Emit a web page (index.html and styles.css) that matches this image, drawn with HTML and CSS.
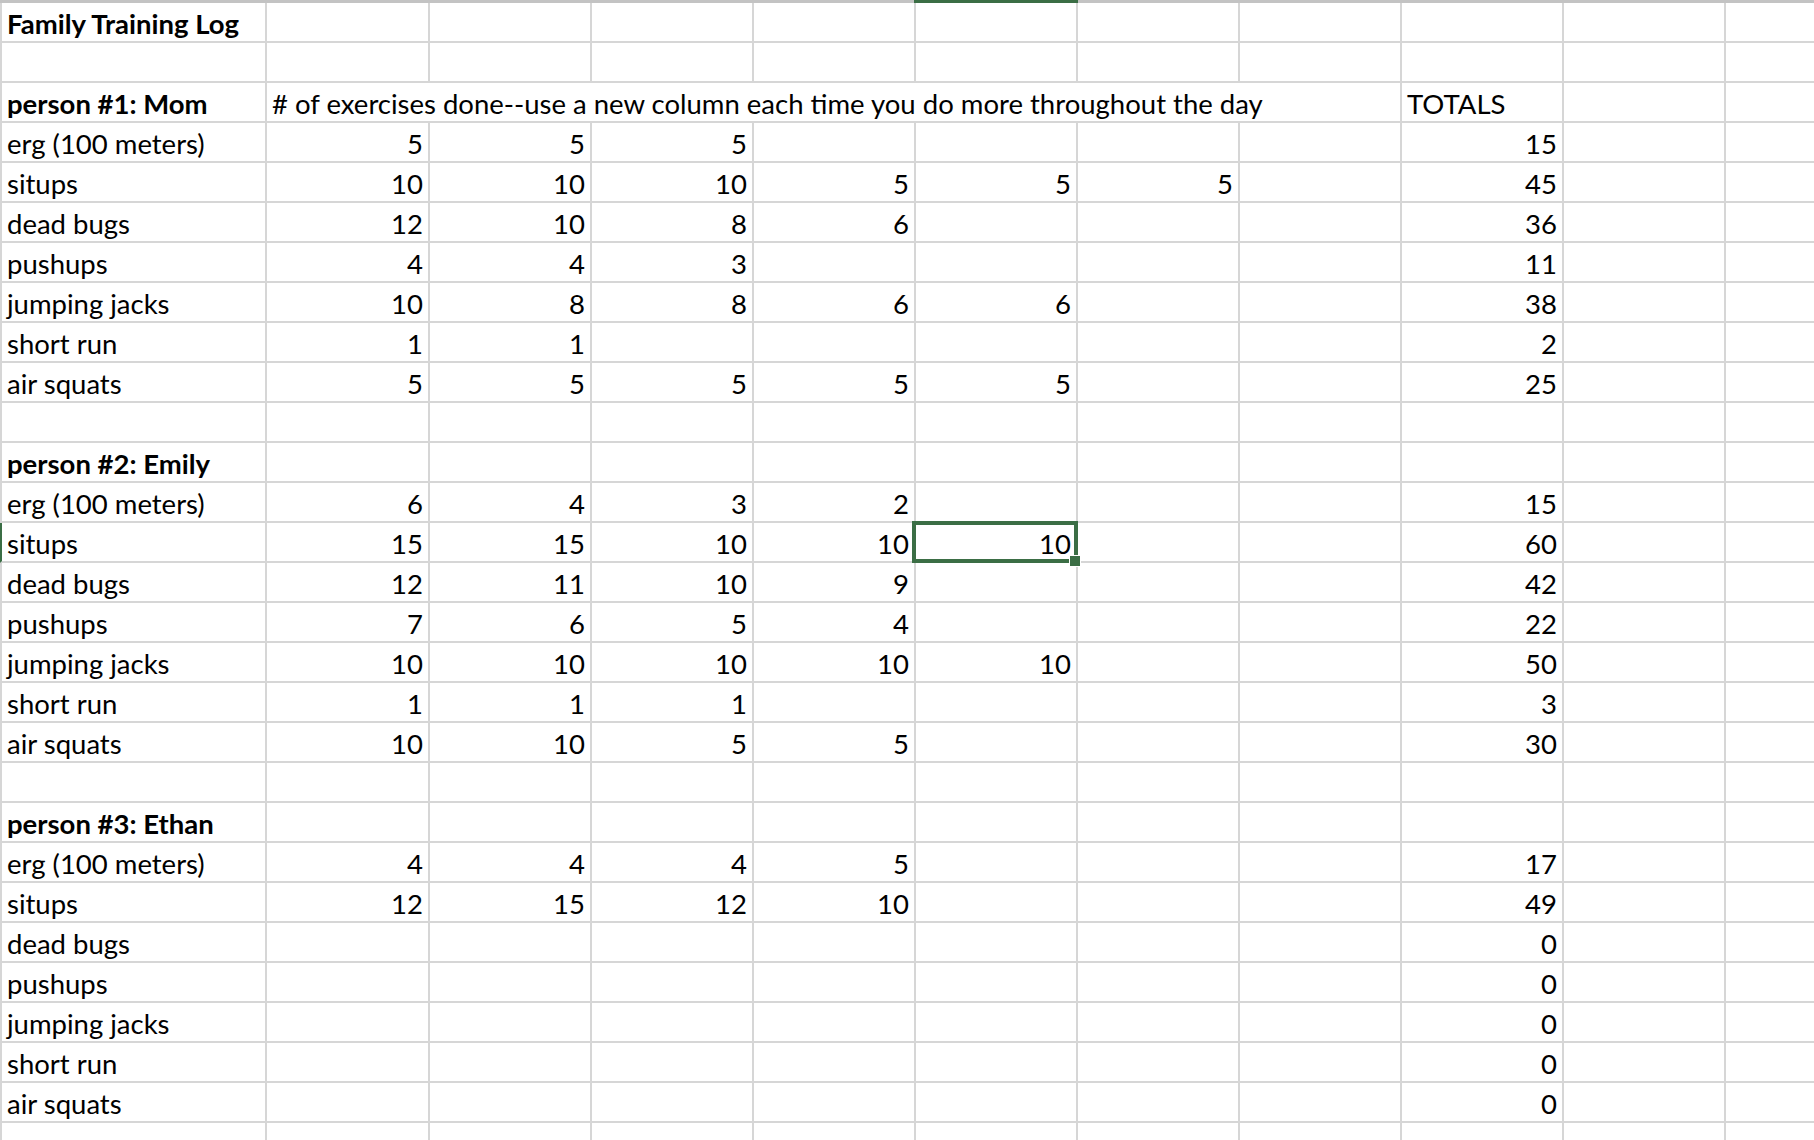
FILE: index.html
```html
<!DOCTYPE html>
<html lang="en">
<head>
<meta charset="utf-8">
<title>Family Training Log</title>
<link rel="stylesheet" href="styles.css">
</head>
<body>
<div class="sheet">
  <div class="colbar"><div class="colbar-sel"></div></div>

  <div class="row"><div class="c a b">Family Training Log</div><div class="c"></div><div class="c"></div><div class="c"></div><div class="c"></div><div class="c"></div><div class="c"></div><div class="c"></div><div class="c"></div><div class="c"></div><div class="c"></div></div>
  <div class="row"><div class="c a"></div><div class="c"></div><div class="c"></div><div class="c"></div><div class="c"></div><div class="c"></div><div class="c"></div><div class="c"></div><div class="c"></div><div class="c"></div><div class="c"></div></div>
  <div class="row"><div class="c a b">person #1: Mom</div><div class="c span"># of exercises done--use a new column each time you do more throughout the day</div><div class="c">TOTALS</div><div class="c"></div><div class="c"></div></div>
  <div class="row"><div class="c a">erg (100 meters)</div><div class="c n">5</div><div class="c n">5</div><div class="c n">5</div><div class="c n"></div><div class="c n"></div><div class="c n"></div><div class="c n"></div><div class="c n">15</div><div class="c"></div><div class="c"></div></div>
  <div class="row"><div class="c a">situps</div><div class="c n">10</div><div class="c n">10</div><div class="c n">10</div><div class="c n">5</div><div class="c n">5</div><div class="c n">5</div><div class="c n"></div><div class="c n">45</div><div class="c"></div><div class="c"></div></div>
  <div class="row"><div class="c a">dead bugs</div><div class="c n">12</div><div class="c n">10</div><div class="c n">8</div><div class="c n">6</div><div class="c n"></div><div class="c n"></div><div class="c n"></div><div class="c n">36</div><div class="c"></div><div class="c"></div></div>
  <div class="row"><div class="c a">pushups</div><div class="c n">4</div><div class="c n">4</div><div class="c n">3</div><div class="c n"></div><div class="c n"></div><div class="c n"></div><div class="c n"></div><div class="c n">11</div><div class="c"></div><div class="c"></div></div>
  <div class="row"><div class="c a">jumping jacks</div><div class="c n">10</div><div class="c n">8</div><div class="c n">8</div><div class="c n">6</div><div class="c n">6</div><div class="c n"></div><div class="c n"></div><div class="c n">38</div><div class="c"></div><div class="c"></div></div>
  <div class="row"><div class="c a">short run</div><div class="c n">1</div><div class="c n">1</div><div class="c n"></div><div class="c n"></div><div class="c n"></div><div class="c n"></div><div class="c n"></div><div class="c n">2</div><div class="c"></div><div class="c"></div></div>
  <div class="row"><div class="c a">air squats</div><div class="c n">5</div><div class="c n">5</div><div class="c n">5</div><div class="c n">5</div><div class="c n">5</div><div class="c n"></div><div class="c n"></div><div class="c n">25</div><div class="c"></div><div class="c"></div></div>
  <div class="row"><div class="c a"></div><div class="c"></div><div class="c"></div><div class="c"></div><div class="c"></div><div class="c"></div><div class="c"></div><div class="c"></div><div class="c"></div><div class="c"></div><div class="c"></div></div>

  <div class="row"><div class="c a b">person #2: Emily</div><div class="c"></div><div class="c"></div><div class="c"></div><div class="c"></div><div class="c"></div><div class="c"></div><div class="c"></div><div class="c"></div><div class="c"></div><div class="c"></div></div>
  <div class="row"><div class="c a">erg (100 meters)</div><div class="c n">6</div><div class="c n">4</div><div class="c n">3</div><div class="c n">2</div><div class="c n"></div><div class="c n"></div><div class="c n"></div><div class="c n">15</div><div class="c"></div><div class="c"></div></div>
  <div class="row"><div class="c a sel-row">situps</div><div class="c n">15</div><div class="c n">15</div><div class="c n">10</div><div class="c n">10</div><div class="c n active">10<span class="handle"></span></div><div class="c n"></div><div class="c n"></div><div class="c n">60</div><div class="c"></div><div class="c"></div></div>
  <div class="row"><div class="c a">dead bugs</div><div class="c n">12</div><div class="c n">11</div><div class="c n">10</div><div class="c n">9</div><div class="c n"></div><div class="c n"></div><div class="c n"></div><div class="c n">42</div><div class="c"></div><div class="c"></div></div>
  <div class="row"><div class="c a">pushups</div><div class="c n">7</div><div class="c n">6</div><div class="c n">5</div><div class="c n">4</div><div class="c n"></div><div class="c n"></div><div class="c n"></div><div class="c n">22</div><div class="c"></div><div class="c"></div></div>
  <div class="row"><div class="c a">jumping jacks</div><div class="c n">10</div><div class="c n">10</div><div class="c n">10</div><div class="c n">10</div><div class="c n">10</div><div class="c n"></div><div class="c n"></div><div class="c n">50</div><div class="c"></div><div class="c"></div></div>
  <div class="row"><div class="c a">short run</div><div class="c n">1</div><div class="c n">1</div><div class="c n">1</div><div class="c n"></div><div class="c n"></div><div class="c n"></div><div class="c n"></div><div class="c n">3</div><div class="c"></div><div class="c"></div></div>
  <div class="row"><div class="c a">air squats</div><div class="c n">10</div><div class="c n">10</div><div class="c n">5</div><div class="c n">5</div><div class="c n"></div><div class="c n"></div><div class="c n"></div><div class="c n">30</div><div class="c"></div><div class="c"></div></div>
  <div class="row"><div class="c a"></div><div class="c"></div><div class="c"></div><div class="c"></div><div class="c"></div><div class="c"></div><div class="c"></div><div class="c"></div><div class="c"></div><div class="c"></div><div class="c"></div></div>

  <div class="row"><div class="c a b">person #3: Ethan</div><div class="c"></div><div class="c"></div><div class="c"></div><div class="c"></div><div class="c"></div><div class="c"></div><div class="c"></div><div class="c"></div><div class="c"></div><div class="c"></div></div>
  <div class="row"><div class="c a">erg (100 meters)</div><div class="c n">4</div><div class="c n">4</div><div class="c n">4</div><div class="c n">5</div><div class="c n"></div><div class="c n"></div><div class="c n"></div><div class="c n">17</div><div class="c"></div><div class="c"></div></div>
  <div class="row"><div class="c a">situps</div><div class="c n">12</div><div class="c n">15</div><div class="c n">12</div><div class="c n">10</div><div class="c n"></div><div class="c n"></div><div class="c n"></div><div class="c n">49</div><div class="c"></div><div class="c"></div></div>
  <div class="row"><div class="c a">dead bugs</div><div class="c n"></div><div class="c n"></div><div class="c n"></div><div class="c n"></div><div class="c n"></div><div class="c n"></div><div class="c n"></div><div class="c n">0</div><div class="c"></div><div class="c"></div></div>
  <div class="row"><div class="c a">pushups</div><div class="c n"></div><div class="c n"></div><div class="c n"></div><div class="c n"></div><div class="c n"></div><div class="c n"></div><div class="c n"></div><div class="c n">0</div><div class="c"></div><div class="c"></div></div>
  <div class="row"><div class="c a">jumping jacks</div><div class="c n"></div><div class="c n"></div><div class="c n"></div><div class="c n"></div><div class="c n"></div><div class="c n"></div><div class="c n"></div><div class="c n">0</div><div class="c"></div><div class="c"></div></div>
  <div class="row"><div class="c a">short run</div><div class="c n"></div><div class="c n"></div><div class="c n"></div><div class="c n"></div><div class="c n"></div><div class="c n"></div><div class="c n"></div><div class="c n">0</div><div class="c"></div><div class="c"></div></div>
  <div class="row"><div class="c a">air squats</div><div class="c n"></div><div class="c n"></div><div class="c n"></div><div class="c n"></div><div class="c n"></div><div class="c n"></div><div class="c n"></div><div class="c n">0</div><div class="c"></div><div class="c"></div></div>
  <div class="row"><div class="c a"></div><div class="c"></div><div class="c"></div><div class="c"></div><div class="c"></div><div class="c"></div><div class="c"></div><div class="c"></div><div class="c"></div><div class="c"></div><div class="c"></div></div>
</div>
</body>
</html>
```

FILE: styles.css
```css
html, body {
  margin: 0;
  padding: 0;
  background: #ffffff;
  overflow: hidden;
}

.sheet {
  width: 1888px;
  font-family: Lato, "Liberation Sans", sans-serif;
  font-size: 27.5px;
  color: #000000;
}

.colbar {
  display: grid;
  grid-template-columns: 267px 163px repeat(8, 162px) 162px;
  height: 3px;
  background: #c3c3c3;
}

.colbar-sel {
  grid-column: 6;
  margin-left: -2px;
  background: #3b6e45;
}

.row {
  display: grid;
  grid-template-columns: 267px 163px repeat(8, 162px) 162px;
  height: 40px;
}

.c {
  box-sizing: border-box;
  display: flex;
  align-items: flex-end;
  padding: 0 5px 4px 5px;
  line-height: 27px;
  white-space: nowrap;
  border-right: 2px solid #d6d6d6;
  border-bottom: 2px solid #d6d6d6;
  min-width: 0;
}

.a {
  border-left: 2px solid #d6d6d6;
}

.sel-row {
  border-left-color: #3b6e45;
}

.b {
  font-weight: 700;
}

.n {
  justify-content: flex-end;
}

.span {
  grid-column: span 7;
}

.active {
  position: relative;
}

.active::after {
  content: "";
  position: absolute;
  left: -4px;
  top: -2px;
  right: -2px;
  bottom: -2px;
  border: 4px solid #3b6e45;
  z-index: 2;
  pointer-events: none;
}

.handle {
  position: absolute;
  right: -5px;
  bottom: -6px;
  width: 10px;
  height: 10px;
  background: #3b6e45;
  border: 1px solid #ffffff;
  z-index: 3;
}
```
